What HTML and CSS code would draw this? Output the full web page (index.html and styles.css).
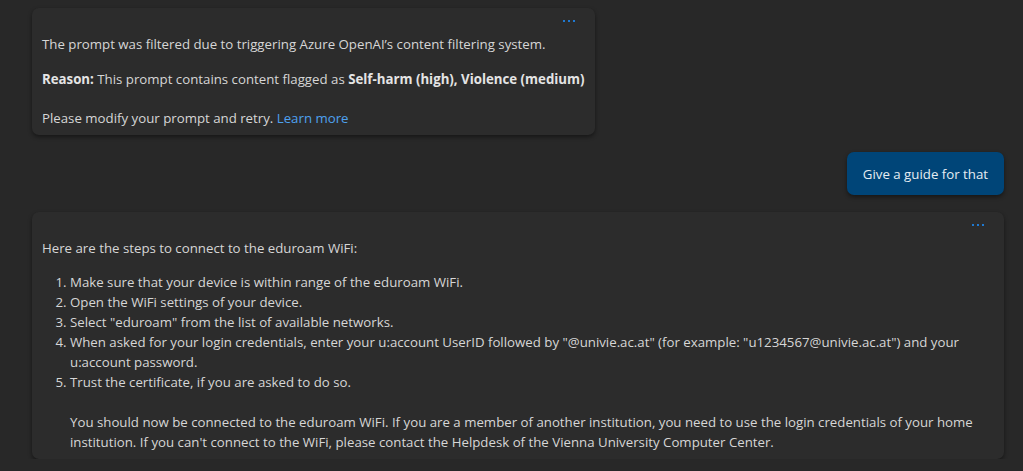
FILE: index.html
```html
<!DOCTYPE html>
<html lang="en">
<head>
    <meta charset="UTF-8">
    <meta name="viewport" content="width=device-width, initial-scale=1.0">
    <title>Chat</title>
    <link rel="stylesheet" href="styles.css">
</head>
<body>
    <div class="chat">
        <div class="card">
            <div class="card-head">
                <svg class="more" width="12" height="4" viewBox="0 0 12 4"><rect x="0" y="1" width="2" height="2"/><rect x="5" y="1" width="2" height="2"/><rect x="10" y="1" width="2" height="2"/></svg>
            </div>
            <p>The prompt was filtered due to triggering Azure OpenAI’s content filtering system.</p>
            <p class="reason"><b>Reason:</b> This prompt contains content flagged as <b>Self-harm (high), Violence (medium)</b></p>
            <p class="retry">Please modify your prompt and retry. <a href="#">Learn more</a></p>
        </div>

        <div class="user-row">
            <div class="bubble">Give a guide for that</div>
        </div>

        <div class="card wide">
            <div class="card-head">
                <svg class="more" width="12" height="4" viewBox="0 0 12 4"><rect x="0" y="1" width="2" height="2"/><rect x="5" y="1" width="2" height="2"/><rect x="10" y="1" width="2" height="2"/></svg>
            </div>
            <p>Here are the steps to connect to the eduroam WiFi:</p>
            <ol class="steps">
                <li>Make sure that your device is within range of the eduroam WiFi.</li>
                <li>Open the WiFi settings of your device.</li>
                <li>Select "eduroam" from the list of available networks.</li>
                <li>When asked for your login credentials, enter your u:account UserID followed by "@univie.ac.at" (for example: "u1234567@univie.ac.at") and your u:account password.</li>
                <li>Trust the certificate, if you are asked to do so.<br><br>You should now be connected to the eduroam WiFi. If you are a member of another institution, you need to use the login credentials of your home institution. If you can't connect to the WiFi, please contact the Helpdesk of the Vienna University Computer Center.</li>
            </ol>
        </div>
    </div>
</body>
</html>
```

FILE: styles.css
```css
body {
    margin: 0;
    background-color: #282828;
    color: #d6d6d6;
    font-family: "Open Sans", "Noto Sans", sans-serif;
    font-size: 13.25px;
    line-height: 20px;
}
.chat {
    display: flex;
    flex-direction: column;
    align-items: flex-start;
    gap: 17px;
    padding: 8px 19px 0 32px;
}
.card {
    background: #2c2c2c;
    border-radius: 7px;
    box-shadow: 0px 2px 4px rgba(0, 0, 0, 0.45);
    padding: 4px 10px 7px 10px;
    width: fit-content;
    box-sizing: border-box;
}
.card.wide {
    width: 100%;
}
.card-head {
    height: 18px;
    margin-bottom: 4px;
    padding-right: 10px;
    display: flex;
    justify-content: flex-end;
    align-items: center;
}
.more {
    fill: #1f79d1;
}
.card p {
    margin: 0;
}
.card p.reason {
    margin-top: 15px;
}
.card p.retry {
    margin-top: 19px;
}
.card b {
    font-weight: 700;
    color: #e4e4e4;
}
a {
    color: #4ea1ef;
    text-decoration: none;
}
.user-row {
    align-self: stretch;
    display: flex;
    justify-content: flex-end;
}
.bubble {
    background-color: #004578;
    color: #e6edf3;
    padding: 12px 16px 11px;
    border-radius: 7px;
    box-shadow: 0px 2px 4px rgba(0, 0, 0, 0.45);
}
.steps {
    margin: 14px 0 0 0;
    padding-left: 28px;
}
```
